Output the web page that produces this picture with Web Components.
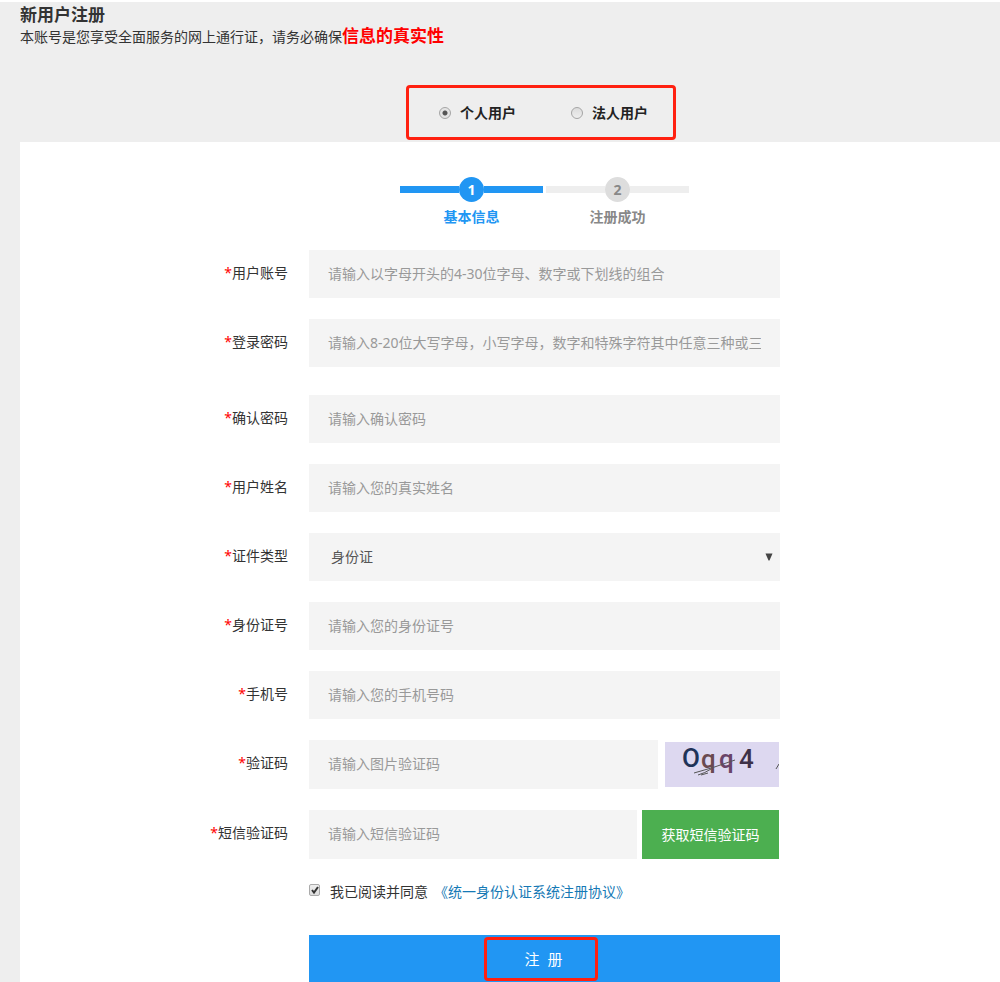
<!DOCTYPE html>
<html lang="zh-CN">
<head>
<meta charset="utf-8">
<meta name="viewport" content="width=device-width, initial-scale=1">
<title>新用户注册</title>
<style>
  :root {
    --columns: 268fr 471fr 199fr;
    --gutter: 21px;
    --blue: #2196f3;
    --mark: #ff2010;
    --field: #f4f4f4;
  }
  body {
    margin: 0;
    min-height: 100vh;
    display: flex;
    flex-direction: column;
    background: #eee;
    color: #333;
    font: 14px/20px "Noto Sans", "Noto Sans CJK SC", sans-serif;
  }
  register-form {
    flex: 1;
  }
</style>
</head>
<body>
<register-header heading="新用户注册">本账号是您享受全面服务的网上通行证，请务必确保<strong slot="notice">信息的真实性</strong><user-type slot="type"></user-type></register-header>

<register-form>
  <step-bar slot="steps">
    <step-item number="1" active>基本信息</step-item>
    <step-item number="2">注册成功</step-item>
  </step-bar>
  <form-field label="用户账号" placeholder="请输入以字母开头的4-30位字母、数字或下划线的组合"></form-field>
  <form-field class="hinted" label="登录密码" type="password" placeholder="请输入8-20位大写字母，小写字母，数字和特殊字符其中任意三种或三种以上的组合"></form-field>
  <form-field label="确认密码" type="password" placeholder="请输入确认密码"></form-field>
  <form-field label="用户姓名" placeholder="请输入您的真实姓名"></form-field>
  <form-select label="证件类型" options="身份证"></form-select>
  <form-field label="身份证号" placeholder="请输入您的身份证号"></form-field>
  <form-field label="手机号" type="tel" placeholder="请输入您的手机号码"></form-field>
  <form-field class="tall" label="验证码" placeholder="请输入图片验证码">
    <captcha-image></captcha-image>
  </form-field>
  <form-field class="tall" label="短信验证码" placeholder="请输入短信验证码">
    <sms-button>获取短信验证码</sms-button>
  </form-field>
  <agree-check slot="footer">我已阅读并同意<a slot="link" href="#agreement">《统一身份认证系统注册协议》</a></agree-check>
  <submit-button slot="footer">注  册</submit-button>
</register-form>

<script>
// shared by the text field and the select row
const rowStyle = `
  * { box-sizing: border-box; }
  :host {
    display: grid;
    grid-template-columns: var(--columns);
    column-gap: var(--gutter);
    --height: 48px;
  }
  :host(.hinted) { margin-bottom: 7px; }
  :host(.tall) { --height: 49px; }
  label {
    line-height: 45px;
    text-align: right;
    white-space: nowrap;
  }
  label span { color: #f00; }
  input, select {
    width: 100%;
    min-width: 0;
    height: var(--height);
    margin: 0;
    border: 0;
    border-radius: 0;
    background: var(--field);
    color: #555;
    font: inherit;
  }
`;

function attach(element, html) {
  const template = document.createElement("template");
  template.innerHTML = html;
  element.attachShadow({ mode: "open" });
  element.shadowRoot.appendChild(template.content.cloneNode(true));
}

class RegisterHeader extends HTMLElement {
  constructor() {
    super();
    attach(this, `
      <style>
        :host {
          display: block;
          padding: 2px 0 2px 20px;
          border-top: 2px solid #fff;
        }
        h1 { margin: 0; font-size: 17px; line-height: 21px; }
        p { margin: 0; line-height: 22px; }
        ::slotted(strong) { color: #f00; font-size: 17px; }
        .type {
          display: grid;
          grid-template-columns: var(--columns);
          column-gap: var(--gutter);
          margin-top: 37px;
        }
        ::slotted(user-type) { grid-column: 2; justify-self: center; }
      </style>
      <h1></h1>
      <p><slot></slot><slot name="notice"></slot></p>
      <div class="type"><slot name="type"></slot></div>
    `);
  }

  connectedCallback() {
    this.shadowRoot.querySelector("h1").textContent = this.getAttribute("heading");
  }
}

class UserType extends HTMLElement {
  constructor() {
    super();
    attach(this, `
      <style>
        :host {
          display: flex;
          gap: 55px;
          box-sizing: border-box;
          height: 55px;
          margin-right: 7px;
          padding: 0 25px 0 30px;
          border: 3px solid var(--mark);
          border-radius: 4px;
        }
        label {
          display: flex;
          align-items: center;
          gap: 9px;
          font-weight: 600;
          color: #222;
          white-space: nowrap;
        }
        input {
          appearance: none;
          width: 12px;
          height: 12px;
          margin: 0;
          border: 1px solid #a5a5a5;
          border-radius: 50%;
          background: linear-gradient(#dcdcdc, #eee);
        }
        input:checked {
          background: radial-gradient(circle, #555 0 2px, #e4e4e4 3px);
        }
      </style>
      <label><input type="radio" name="type" value="person" checked>个人用户</label>
      <label><input type="radio" name="type" value="company">法人用户</label>
    `);
  }
}

class RegisterForm extends HTMLElement {
  constructor() {
    super();
    attach(this, `
      <style>
        :host {
          display: block;
          margin-left: 20px;
          padding-top: 35px;
          background: #fff;
        }
        .rows {
          display: flex;
          flex-direction: column;
          gap: 21px;
          margin-top: 23px;
        }
      </style>
      <slot name="steps"></slot>
      <div class="rows"><slot></slot></div>
      <slot name="footer"></slot>
    `);
  }
}

class StepBar extends HTMLElement {
  constructor() {
    super();
    attach(this, `
      <style>
        :host {
          display: grid;
          grid-template-columns: var(--columns);
          column-gap: var(--gutter);
        }
        div {
          grid-column: 2;
          justify-self: center;
          display: flex;
          gap: 3px;
        }
      </style>
      <div><slot></slot></div>
    `);
  }
}

class StepItem extends HTMLElement {
  constructor() {
    super();
    attach(this, `
      <style>
        :host {
          display: block;
          width: 143px;
          text-align: center;
          font-weight: 700;
          color: #888;
          --bar: #eee;
          --dot: #ddd;
          --number: #888;
        }
        :host([active]) {
          color: var(--blue);
          --bar: var(--blue);
          --dot: var(--blue);
          --number: #fff;
        }
        .bar {
          display: flex;
          align-items: center;
        }
        .bar::before, .bar::after {
          content: "";
          flex: 1;
          height: 7px;
          background: var(--bar);
        }
        .bar span {
          width: 25px;
          border-radius: 50%;
          line-height: 25px;
          background: var(--dot);
          color: var(--number);
        }
        .name { margin-top: 5px; }
      </style>
      <div class="bar"><span></span></div>
      <div class="name"><slot></slot></div>
    `);
  }

  connectedCallback() {
    this.shadowRoot.querySelector("span").textContent = this.getAttribute("number");
  }
}

class FormField extends HTMLElement {
  constructor() {
    super();
    attach(this, `
      <style>
        ${rowStyle}
        .control { display: flex; }
        input { flex: 1; padding: 0 19px 2px; }
        input::placeholder { color: #999; opacity: 1; }
      </style>
      <label for="input"><span>*</span></label>
      <div class="control"><input id="input"><slot></slot></div>
    `);
  }

  connectedCallback() {
    const input = this.shadowRoot.querySelector("input");
    this.shadowRoot.querySelector("label").append(this.getAttribute("label"));
    input.type = this.getAttribute("type") ?? "text";
    input.placeholder = this.getAttribute("placeholder") ?? "";
  }
}

class FormSelect extends HTMLElement {
  constructor() {
    super();
    attach(this, `
      <style>
        ${rowStyle}
        .control { display: grid; align-items: center; }
        select, svg { grid-area: 1 / 1; }
        select { appearance: none; padding: 0 22px; }
        svg { justify-self: end; margin-right: 7px; pointer-events: none; }
      </style>
      <label for="select"><span>*</span></label>
      <div class="control">
        <select id="select"></select>
        <svg width="8" height="8" viewBox="0 0 8 8"><path d="M0.5 0.5h7L4.5 7.5h-1z" fill="#444"/></svg>
      </div>
    `);
  }

  connectedCallback() {
    const select = this.shadowRoot.querySelector("select");
    this.shadowRoot.querySelector("label").append(this.getAttribute("label"));
    this.getAttribute("options").split(",").forEach((name) => {
      select.add(new Option(name));
    });
  }
}

class CaptchaImage extends HTMLElement {
  constructor() {
    super();
    attach(this, `
      <style>
        :host { display: block; margin: 2px 1px 0 7px; }
        svg { display: block; background: #ddd8f0; }
        text { font-family: Roboto, sans-serif; font-weight: 500; }
      </style>
      <svg width="114" height="45" viewBox="0 0 114 45" role="img" aria-label="验证码图片">
        <text x="17" y="25" font-size="26" fill="#1f3358">O</text>
        <text x="36" y="26" font-size="26" fill="#6a4a50">q</text>
        <text x="54" y="26" font-size="26" fill="#6a4468">q</text>
        <text x="74" y="26" font-size="26" fill="#3d3148">4</text>
        <path d="M29 31Q48 26 70 18M33 33Q40 31 46 27M36 33l7-2M111 27l3-5" fill="none" stroke="#555" stroke-width="1"/>
      </svg>
    `);
  }
}

class SmsButton extends HTMLElement {
  constructor() {
    super();
    attach(this, `
      <style>
        :host { display: block; margin: 0 1px 0 5px; }
        button {
          width: 137px;
          height: 49px;
          padding: 0;
          border: 0;
          background: #4caf50;
          color: #fff;
          font: inherit;
        }
      </style>
      <button type="button"><slot></slot></button>
    `);
  }
}

class AgreeCheck extends HTMLElement {
  constructor() {
    super();
    attach(this, `
      <style>
        :host {
          display: grid;
          grid-template-columns: var(--columns);
          column-gap: var(--gutter);
          margin-top: 23px;
        }
        .line { grid-column: 2; display: flex; white-space: nowrap; }
        label { display: flex; gap: 10px; }
        .box { display: grid; align-self: start; margin-top: 2px; }
        input, svg { grid-area: 1 / 1; }
        input {
          appearance: none;
          width: 11px;
          height: 12px;
          margin: 0;
          border: 1px solid #aaa;
          border-radius: 2px;
          background: linear-gradient(#eee, #ddd);
        }
        svg { pointer-events: none; }
        input:not(:checked) + svg { visibility: hidden; }
        ::slotted(a) { margin-left: 6px; color: #1579b5; text-decoration: none; }
      </style>
      <div class="line">
        <label>
          <span class="box">
            <input type="checkbox" checked>
            <svg width="11" height="12" viewBox="0 0 11 12"><path d="M3 6l2 2.5L9 3" fill="none" stroke="#333" stroke-width="2"/></svg>
          </span>
          <span><slot></slot></span>
        </label>
        <slot name="link"></slot>
      </div>
    `);
  }
}

class SubmitButton extends HTMLElement {
  constructor() {
    super();
    attach(this, `
      <style>
        :host {
          display: grid;
          grid-template-columns: var(--columns);
          column-gap: var(--gutter);
          margin-top: 33px;
        }
        button {
          grid-column: 2;
          display: flex;
          justify-content: center;
          align-items: center;
          height: 47px;
          padding: 0 7px 0 0;
          border: 0;
          background: var(--blue);
          color: #fff;
          font: inherit;
          font-size: 15px;
          white-space: pre;
        }
        span {
          box-sizing: border-box;
          width: 114px;
          padding-left: 5px;
          border: 3px solid var(--mark);
          border-radius: 4px;
          line-height: 38px;
        }
      </style>
      <button type="submit"><span><slot></slot></span></button>
    `);
  }
}

window.customElements.define("register-header", RegisterHeader);
window.customElements.define("user-type", UserType);
window.customElements.define("register-form", RegisterForm);
window.customElements.define("step-bar", StepBar);
window.customElements.define("step-item", StepItem);
window.customElements.define("form-field", FormField);
window.customElements.define("form-select", FormSelect);
window.customElements.define("captcha-image", CaptchaImage);
window.customElements.define("sms-button", SmsButton);
window.customElements.define("agree-check", AgreeCheck);
window.customElements.define("submit-button", SubmitButton);
</script>
</body>
</html>
